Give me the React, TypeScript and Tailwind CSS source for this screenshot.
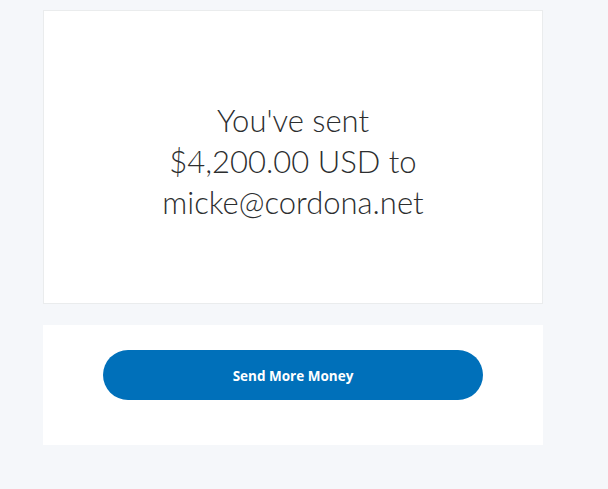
import React from 'react';

export default function App() {
  return (
    <div className="min-h-[489px] w-full bg-[#f5f7fa] pt-[10px]">
      <div className="ml-[43px] w-[500px]">
        {/* Confirmation card */}
        <div className="h-[294px] border border-[#eaeced] bg-white pt-[89px]">
          <p
            className="text-center text-[31px] leading-[41px] font-light text-[#2c2e2f]"
            style={{ fontFamily: 'Lato, "Open Sans", sans-serif' }}
          >
            You've sent
            <br />
            $4,200.00 USD to
            <br />
            micke@cordona.net
          </p>
        </div>

        {/* Actions */}
        <div className="mt-[21px] h-[120px] bg-white pt-[25px] pl-[60px]">
          <button
            className="h-[50px] w-[380px] rounded-full bg-[#0070ba] pt-[2px] text-[13.5px] font-bold text-white"
            style={{ fontFamily: '"Open Sans", sans-serif' }}
          >
            Send More Money
          </button>
        </div>
      </div>
    </div>
  );
}
